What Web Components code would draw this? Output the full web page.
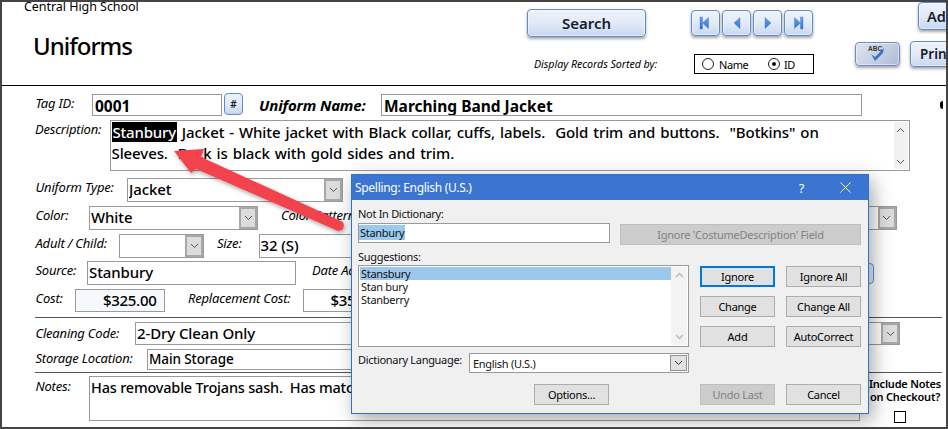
<!doctype html>
<html><head><meta charset="utf-8"><style>
html,body{margin:0;padding:0;background:#fff;height:100%;overflow:hidden}
body{font-family:"Noto Sans","Liberation Sans",sans-serif;color:#000}
</style></head><body>
<app-frame>
  <form-header></form-header>
  <uniform-form></uniform-form>
  <spell-dialog></spell-dialog>
  <red-arrow></red-arrow>
</app-frame>
<script>
const F='"Noto Sans","Liberation Sans",sans-serif';
function def(name,css,html){
  customElements.define(name,class extends HTMLElement{
    constructor(){super();const r=this.attachShadow({mode:'open'});
      r.innerHTML='<style>'+css+'</style>'+html;}
  });
}
def('app-frame',`:host{display:block;position:relative;box-sizing:border-box;width:948px;height:429px;overflow:hidden;border:solid #444;border-width:2px 2px 2px 2px;background:#fff}`,'<slot></slot>');

const GRAD='linear-gradient(180deg,#eef3fb 0%,#e2eaf8 50%,#c8d7ef 100%)';
def('gloss-btn',`:host{display:flex;align-items:center;justify-content:center;box-sizing:border-box;border:1px solid #5b8ccc;border-radius:4px;background:${GRAD};box-shadow:0 2px 3px rgba(60,60,60,.45),inset 0 0 0 1px rgba(255,255,255,.45);color:#14202e;font-weight:600;flex:none}`,'<slot></slot>');

const navIcon=(d,s='')=>`<svg width="16" height="14" viewBox="0 0 16 14" style="${s}"><defs><linearGradient id="g" x1="0" x2="0" y1="0" y2="1"><stop offset="0" stop-color="#6fa3ea"/><stop offset="1" stop-color="#2f6fd6"/></linearGradient></defs><path d="${d}" fill="url(#g)" stroke="#3a76d2" stroke-width=".4"/></svg>`;
def('form-header',`:host{display:flex;box-sizing:border-box;height:84px;border-bottom:1px solid #000;overflow:hidden;align-items:flex-start;font-family:${F}}
.left{width:525px;flex:none;padding-left:22px;box-sizing:border-box}
.school{font-size:12.500px;line-height:14px;margin-top:-2px;letter-spacing:-.05px}
.title{font-size:24px;font-weight:500;line-height:30px;margin:17px 0 0 9px;letter-spacing:-1px}
.mid{width:287px;flex:none}
.r1{display:flex;margin-top:7px}
gloss-btn.search{width:119px;height:28px;font-size:15px}
.nav{display:flex;gap:2px;margin:1px 0 0 45px}
.nav gloss-btn{width:29px;height:26px;color:inherit}
.r2{display:flex;align-items:center;margin-top:17px;padding-left:7px}
.sorted{font-style:italic;font-size:10.700px;width:160px;letter-spacing:-.05px;white-space:nowrap}
.radios{width:120px;height:20px;box-sizing:border-box;border:1px solid #000;display:flex;align-items:center;font-size:11px;padding-left:7px;letter-spacing:-.4px}
.rd{width:12px;height:12px;border:1px solid #222;border-radius:50%;box-sizing:border-box;flex:none;display:flex;align-items:center;justify-content:center}
.rd i{width:4px;height:4px;border-radius:50%;background:#111;display:block}
.right{flex:1;display:flex;flex-direction:column;min-width:0}
.add{margin:0 0 0 104px;width:70px;height:28px;font-size:14.500px;justify-content:flex-start;padding-left:8px}
.r3{display:flex;margin:11px 0 0 41px;gap:10px;align-items:flex-start}
.spell{width:45px;height:24px;margin-top:1px;background:linear-gradient(135deg,#dfe4ee,#c3cde0 60%,#aebbd4);border-color:#6b8fc4}
.print{width:70px;height:26px;font-size:13.500px;justify-content:flex-start;padding-left:9px}
`,`<div class="left"><div class="school">Central High School</div><div class="title">Uniforms</div></div>
<div class="mid"><div class="r1"><gloss-btn class="search">Search</gloss-btn><div class="nav">
<gloss-btn>${navIcon('M4 1h2.500v12H4zM12.500 1.500v11L6.500 7z','margin-right:4px')}</gloss-btn>
<gloss-btn>${navIcon('M11 1.500v11L5 7z')}</gloss-btn>
<gloss-btn>${navIcon('M5 1.500v11l6-5.500z')}</gloss-btn>
<gloss-btn>${navIcon('M3.500 1.500v11l6-5.500zM9.500 1H12v12H9.500z')}</gloss-btn></div></div>
<div class="r2"><div class="sorted">Display Records Sorted by:</div><div class="radios"><span class="rd"></span><span style="margin:0 0 0 5px;width:28px">Name</span><span class="rd" style="margin-left:21px"><i></i></span><span style="margin-left:4px">ID</span></div></div></div>
<div class="right"><gloss-btn class="add">Add</gloss-btn><div class="r3"><gloss-btn class="spell"><svg width="26" height="20" viewBox="0 0 26 20"><text x="3" y="7" font-size="6.500" font-weight="700" fill="#333" font-family="Liberation Sans">ABC</text><path d="M6 10l4 3 9-9-1 5-8 8z" fill="#3a6fd0"/></svg></gloss-btn><gloss-btn class="print">Print</gloss-btn></div></div>`);

def('f-label',`:host{display:block;flex:none;font-style:italic;font-size:13px;line-height:16px;letter-spacing:-.2px;white-space:nowrap;color:#000}`,'<slot></slot>');
def('f-box',`:host{display:flex;flex:none;box-sizing:border-box;align-items:center;border:1px solid #9a9a9a;background:#fff;font-size:15px;font-weight:500;padding-left:1px;white-space:pre;overflow:hidden;position:relative;letter-spacing:-.1px}
.txt{flex:1;min-width:0;overflow:hidden;margin-top:-2px}
.chev{display:none;flex:none;width:18px;align-self:stretch;background:#dcdcdc;border:2px solid #a8a8a8;box-sizing:border-box;align-items:center;justify-content:center}
:host([select]) .chev{display:flex}
:host([flat]) .txt{margin-top:1px;padding-left:1px}
`,`<div class="txt"><slot></slot></div><div class="chev"><svg width="9" height="6" viewBox="0 0 9 6"><path d="M1 1l3.500 3.500L8 1" fill="none" stroke="#555" stroke-width="1"/></svg></div>`);

def('uniform-form',`:host{display:flex;flex-direction:column;box-sizing:border-box;padding:0 0 0 33px;font-family:${F};height:340px;overflow:hidden}
.row{display:flex;align-items:flex-start;flex:none}
f-label{margin-top:1px;margin-left:.5px;margin-right:.5px}
.hr{height:1px;background:#555;width:907px;flex:none}
b{font-weight:700;font-size:15.500px;letter-spacing:0}
.sel{background:#000;color:#fff;padding:0 1px;letter-spacing:-.2px}
.scroll{flex:none;width:14px;align-self:stretch;background:#f1f1f1;display:flex;flex-direction:column;justify-content:space-between;align-items:center;padding:5px 0 4px;box-sizing:border-box;margin:1px 1px 1px 0}
.desc{flex:1;padding:1px 0 0 1px;box-sizing:border-box;font-size:15px;line-height:21px;white-space:pre-wrap;letter-spacing:-.1px;word-spacing:1.200px;height:49px;overflow:hidden}
.side{display:flex;flex-direction:column;align-items:center;font-size:11px;font-weight:600;line-height:13px;text-align:center;width:78px;letter-spacing:-.2px}
.cb{width:12px;height:12px;border:1px solid #000;box-sizing:border-box;margin:8px 11px 0 0}
.hash{width:19px;height:22px;font-size:10px;margin:-1px 0 0 2px;box-shadow:none}
.dot{width:3px;height:8px;background:#000;border-radius:3px 0 0 3px;margin:7px 0 0 78px;flex:none}
.pill{width:12px;height:21px;border:1px solid #6b93cc;border-radius:4px;background:#e6eefa;box-sizing:border-box;flex:none}
`,`
<div class="row" style="margin-top:8px;height:22px"><f-label style="width:56px;margin-top:1px">Tag ID:</f-label><f-box flat style="width:130px;height:22px"><b>0001</b></f-box><gloss-btn class="hash">#</gloss-btn><f-label style="margin-left:17px;width:121.500px;font-weight:700;font-size:15px;margin-top:3px;margin-left:16px;letter-spacing:-.15px">Uniform Name:</f-label><f-box flat style="width:481px;height:22px"><b>Marching Band Jacket</b></f-box><div class="dot"></div></div>
<div class="row" style="margin-top:4px;height:51px"><f-label style="width:74px;margin-left:0">Description:</f-label><f-box style="width:800px;height:51px;padding:0"><div style="display:flex;height:49px;margin-top:2px"><div class="desc" style="width:783px"><span class="sel">Stanbury</span> Jacket - White jacket with Black collar, cuffs, labels.  Gold trim and buttons.  "Botkins" on
Sleeves.  Back is black with gold sides and trim.</div><div class="scroll"><svg width="9" height="6" viewBox="0 0 9 6"><path d="M1 5l3.500-3.500L8 5" fill="none" stroke="#555"/></svg><svg width="9" height="6" viewBox="0 0 9 6"><path d="M1 1l3.500 3.500L8 1" fill="none" stroke="#555"/></svg></div></div></f-box></div>
<div class="row" style="margin-top:7px;height:24px"><f-label style="width:91px">Uniform Type:</f-label><f-box select style="width:216px;height:24px">Jacket</f-box></div>
<div class="row" style="margin-top:4px;height:24px"><f-label style="width:53px">Color:</f-label><f-box select style="width:169px;height:24px">White</f-box><f-label style="margin-left:23px;width:322px">Color Pattern:</f-label><f-box select style="width:293px;height:24px"></f-box></div>
<div class="row" style="margin-top:4px;height:24px"><f-label style="width:83px">Adult / Child:</f-label><f-box select style="width:85px;height:24px"></f-box><f-label style="margin-left:13px;width:41px">Size:</f-label><f-box style="width:200px;height:24px">32 (S)</f-box></div>
<div class="row" style="margin-top:3px;height:24px"><f-label style="width:51px">Source:</f-label><f-box style="width:209px;height:24px">Stanbury</f-box><f-label style="margin-left:16px;width:549px">Date Added:</f-label><div class="pill" style="margin-top:2px"></div></div>
<div class="row" style="margin-top:4px;height:23px"><f-label style="width:39px">Cost:</f-label><f-box style="width:90px;height:23px;background:#f5f8fc;padding-left:27px;letter-spacing:-.3px">$325.00</f-box><f-label style="margin-left:23px;width:114px">Replacement Cost:</f-label><f-box style="width:200px;height:23px;padding-left:27px;letter-spacing:-.3px">$350.00</f-box></div>
<div class="hr" style="margin-top:5px"></div>
<div class="row" style="margin-top:4px;height:23px"><f-label style="width:99px;margin-top:3px">Cleaning Code:</f-label><f-box select style="width:765px;height:23px">2-Dry Clean Only</f-box></div>
<div class="row" style="margin-top:4px;height:21px"><f-label style="width:111px;margin-top:1px">Storage Location:</f-label><f-box style="width:500px;height:21px;font-size:13.500px">Main Storage</f-box></div>
<div class="hr" style="margin-top:2px"></div>
<div class="row" style="margin-top:3px;height:45px"><f-label style="width:53px;margin-top:2px">Notes:</f-label><f-box style="width:771px;height:45px;align-items:flex-start;font-size:14.500px;letter-spacing:-.2px;padding-top:2px">Has removable Trojans sash.  Has matching pants.</f-box><div class="side" style="margin-left:6px;margin-top:1px"><span>Include Notes on Checkout?</span><div class="cb"></div></div></div>
`);

def('dlg-btn',`:host{display:flex;align-items:center;justify-content:center;box-sizing:border-box;width:75px;height:21px;border:1px solid #adadad;background:#e1e1e1;font-size:11px;color:#000;flex:none;white-space:nowrap;letter-spacing:-.25px}
:host([focus]){border:2px solid #0078d7}
:host([off]){background:#ccc;border-color:#bfbfbf;color:#838383}`,'<slot></slot>');

def('spell-dialog',`:host{position:absolute;left:349px;top:172px;width:518px;height:240px;box-sizing:border-box;border:1px solid #2f6fce;background:#f0f0f0;box-shadow:4px 6px 18px rgba(0,0,0,.35);font-family:${F};font-size:11px;letter-spacing:-.3px;display:flex;flex-direction:column;color:#111}
.title{height:25px;background:#3b74d1;color:#fff;flex:none;display:flex;align-items:center;padding-left:3px;font-size:12px}
.title span{flex:1}
.title .q{flex:none;margin-right:36px;font-size:13px}
.title svg{margin-right:17px}
.body{flex:1;display:flex;flex-direction:column;padding:0 6px}
.lb{line-height:14px;white-space:nowrap}
.r{display:flex}
.inp{box-sizing:border-box;border:1px solid #9a9a9a;background:#fff;flex:none}
.hl{background:#99c9ef;padding:0 1px}
.list{width:331px;height:82px;display:flex;padding:1px;gap:0}
.items{flex:1;line-height:13px;padding:0}
.items div{padding-left:1px;height:13px}
.items .on{background:#9cc8ee}
.sb{width:16px;background:#f3f3f3;display:flex;flex-direction:column;justify-content:space-between;align-items:center;padding:5px 0;box-sizing:border-box}
.col{display:grid;grid-template-columns:75px 75px;gap:9px 11px;margin-left:11px;align-content:start;margin-top:1px}
.chev{width:17px;background:#e1e1e1;border:1px solid #8f8f8f;box-sizing:border-box;display:flex;align-items:center;justify-content:center;margin:1px}
`,`<div class="title"><span>Spelling: English (U.S.)</span><span class="q">?</span><svg width="11" height="11" viewBox="0 0 11 11"><path d="M.5.500l10 10M10.500.500l-10 10" stroke="#fff" fill="none"/></svg></div>
<div class="body">
<div class="lb" style="margin-top:7px">Not In Dictionary:</div>
<div class="r" style="margin-top:2px"><div class="inp" style="width:252px;height:20px;padding:2px 0;line-height:14px"><span class="hl">Stanbury</span></div><dlg-btn off style="width:241px;margin:1px 0 0 10px">Ignore 'CostumeDescription' Field</dlg-btn></div>
<div class="lb" style="margin-top:5px">Suggestions:</div>
<div class="r" style="margin-top:1px"><div class="inp list"><div class="items"><div class="on">Stansbury</div><div>Stan bury</div><div>Stanberry</div></div><div class="sb"><svg width="9" height="6" viewBox="0 0 9 6"><path d="M1 5l3.500-3.500L8 5" fill="none" stroke="#bbb" stroke-width="1.500"/></svg><svg width="9" height="6" viewBox="0 0 9 6"><path d="M1 1l3.500 3.500L8 1" fill="none" stroke="#bbb" stroke-width="1.500"/></svg></div></div>
<div class="col"><dlg-btn focus>Ignore</dlg-btn><dlg-btn>Ignore All</dlg-btn><dlg-btn>Change</dlg-btn><dlg-btn>Change All</dlg-btn><dlg-btn>Add</dlg-btn><dlg-btn>AutoCorrect</dlg-btn></div></div>
<div class="r" style="margin-top:6px"><div class="lb" style="width:111px;margin-top:0">Dictionary Language:</div><div class="inp" style="width:220px;height:20px;display:flex;align-items:stretch"><div style="flex:1;padding:2px 3px;line-height:15px">English (U.S.)</div><div class="chev"><svg width="9" height="6" viewBox="0 0 9 6"><path d="M1 1l3.500 3.500L8 1" fill="none" stroke="#333"/></svg></div></div></div>
<div class="r" style="margin-top:11px"><dlg-btn style="margin-left:176px">Options...</dlg-btn><dlg-btn off style="margin-left:91px">Undo Last</dlg-btn><dlg-btn style="margin-left:11px">Cancel</dlg-btn></div>
</div>`);

def('red-arrow',`:host{position:absolute;left:-2px;top:-2px;width:948px;height:429px;pointer-events:none;display:block}
svg{display:block;overflow:visible}`,`<svg width="948" height="429" viewBox="0 0 948 429"><defs><filter id="s" x="-10%" y="-10%" width="130%" height="130%"><feDropShadow dx="1" dy="2" stdDeviation="2" flood-color="#000" flood-opacity=".35"/></filter></defs><path filter="url(#s)" fill="#f2434b" d="M174 151L204 149L201 157L343 222Q345 227 342 230L338 231L196 169L191 173Z"/></svg>`);
</script>
</body></html>
